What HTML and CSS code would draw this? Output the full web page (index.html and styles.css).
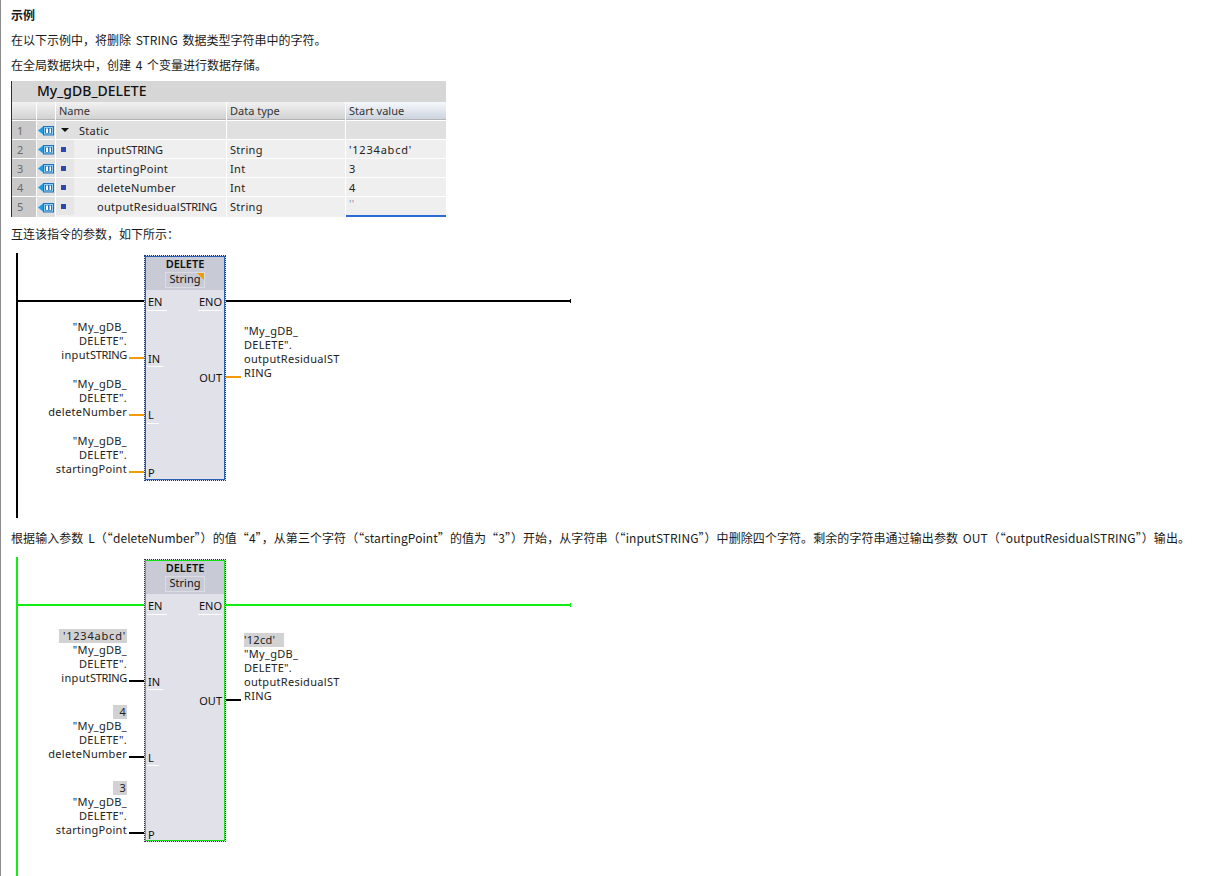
FILE: index.html
```html
<!DOCTYPE html>
<html lang="zh">
<head>
<meta charset="utf-8">
<title>DELETE 示例</title>
<link rel="stylesheet" href="styles.css">
</head>
<body>
<svg class="defs" width="0" height="0" aria-hidden="true">
  <symbol id="db-icon" viewBox="0 0 16 11">
    <path d="M0 5.5 5 1.5V4H6V9H5V9.5Z" fill="#1c9ae6"/>
    <rect x="5.5" y="1.5" width="10" height="8.5" fill="#8fcdf2" stroke="#1f74bd"/>
    <rect x="7" y="3" width="7" height="5.5" fill="#1f74bd"/>
    <rect x="8" y="3.5" width="2" height="4.5" fill="#fff"/>
    <rect x="11.5" y="3.5" width="1.5" height="4.5" fill="#fff"/>
  </symbol>
</svg>
<main class="page">
  <p class="para heading">示例</p>
  <p class="para">在以下示例中，将删除 STRING 数据类型字符串中的字符。</p>
  <p class="para">在全局数据块中，创建 4 个变量进行数据存储。</p>

  <section class="db">
    <div class="db-title">My_gDB_DELETE</div>
    <div class="db-grid">
      <div class="hd"></div><div class="hd"></div><div class="hd name-hd">Name</div><div class="hd">Data type</div><div class="hd hd-sel">Start value</div>

      <div class="num">1</div><div class="ico"><svg class="db-icon"><use href="#db-icon"/></svg></div><div class="cell first name-static"><span class="tri"></span>Static</div><div class="cell first"></div><div class="cell first"></div>

      <div class="num">2</div><div class="ico"><svg class="db-icon"><use href="#db-icon"/></svg></div><div class="cell name"><span class="dot-wrap"><span class="dot"></span></span><span class="var">input<span class="caps">STRING</span></span></div><div class="cell">String</div><div class="cell"><span class="digits">'1234abcd'</span></div>

      <div class="num">3</div><div class="ico"><svg class="db-icon"><use href="#db-icon"/></svg></div><div class="cell name"><span class="dot-wrap"><span class="dot"></span></span><span class="var">startingPoint</span></div><div class="cell">Int</div><div class="cell">3</div>

      <div class="num">4</div><div class="ico"><svg class="db-icon"><use href="#db-icon"/></svg></div><div class="cell name"><span class="dot-wrap"><span class="dot"></span></span><span class="var">deleteNumber</span></div><div class="cell">Int</div><div class="cell">4</div>

      <div class="num">5</div><div class="ico"><svg class="db-icon"><use href="#db-icon"/></svg></div><div class="cell name"><span class="dot-wrap"><span class="dot"></span></span><span class="var">outputResidual<span class="caps">STRING</span></span></div><div class="cell">String</div><div class="cell cell-sel">''</div>
    </div>
  </section>

  <p class="para para-mid">互连该指令的参数，如下所示：</p>

  <section class="lad lad-edit">
    <div class="rail"></div>
    <div class="wire wire-l"></div>
    <div class="wire wire-r"></div>
    <div class="fb">
      <div class="fb-head">
        <div class="fb-name">DELETE</div>
        <div class="fb-type">String<span class="corner"></span></div>
      </div>
      <span class="pin p-en">EN</span><span class="pin p-eno">ENO</span>
      <span class="ul ul-en"></span><span class="ul ul-eno"></span>
      <span class="pin p-in">IN</span><span class="ul ul-in"></span>
      <span class="pin p-l">L</span><span class="ul ul-l"></span>
      <span class="pin p-p">P</span>
      <span class="pin p-out">OUT</span>
    </div>
    <div class="arg arg-1">"My_gDB_<br>DELETE".<br>input<span class="caps">STRING</span></div><div class="stub stub-1"></div>
    <div class="arg arg-2">"My_gDB_<br>DELETE".<br>deleteNumber</div><div class="stub stub-2"></div>
    <div class="arg arg-3">"My_gDB_<br>DELETE".<br>startingPoint</div><div class="stub stub-3"></div>
    <div class="arg-out">"My_gDB_<br>DELETE".<br>outputResidualST<br>RING</div><div class="stub stub-out"></div>
  </section>

  <p class="para para-long">根据输入参数 L（“deleteNumber”）的值“4”，从第三个字符（“startingPoint”的值为“3”）开始，从字符串（“inputSTRING”）中删除四个字符。剩余的字符串通过输出参数 OUT（“outputResidualSTRING”）输出。</p>

  <section class="lad lad-run">
    <div class="rail"></div>
    <div class="wire wire-l"></div>
    <div class="wire wire-r"></div>
    <div class="fb">
      <div class="fb-head">
        <div class="fb-name">DELETE</div>
        <div class="fb-type">String</div>
      </div>
      <span class="pin p-en">EN</span><span class="pin p-eno">ENO</span>
      <span class="ul ul-en"></span><span class="ul ul-eno"></span>
      <span class="pin p-in">IN</span><span class="ul ul-in"></span>
      <span class="pin p-l">L</span><span class="ul ul-l"></span>
      <span class="pin p-p">P</span>
      <span class="pin p-out">OUT</span>
    </div>
    <div class="arg arg-1"><span class="val val-long digits">'1234abcd'</span>"My_gDB_<br>DELETE".<br>input<span class="caps">STRING</span></div><div class="stub stub-1"></div>
    <div class="arg arg-2"><span class="val val-short">4</span>"My_gDB_<br>DELETE".<br>deleteNumber</div><div class="stub stub-2"></div>
    <div class="arg arg-3"><span class="val val-short">3</span>"My_gDB_<br>DELETE".<br>startingPoint</div><div class="stub stub-3"></div>
    <div class="arg-out"><span class="val val-out">'12cd'</span>"My_gDB_<br>DELETE".<br>outputResidualST<br>RING</div><div class="stub stub-out"></div>
  </section>
</main>
</body>
</html>
```
FILE: styles.css
```css
* { box-sizing: border-box; }
html, body { margin: 0; padding: 0; background: #fff; }
body {
  height: 876px;
  overflow: hidden;
  font-family: "Noto Sans", "Noto Sans CJK SC", sans-serif;
  font-size: 11px;
  color: #1a1a1a;
}
.defs { position: absolute; }
.page {
  height: 876px;
  border-left: 1px solid #8c8c8c;
  padding: 3px 0 0 10px;
  overflow: hidden;
}
.para {
  margin: 0;
  height: 25px;
  line-height: 24px;
  white-space: nowrap;
  font-family: "Noto Sans CJK SC", "Noto Sans", sans-serif;
  font-size: 12px;
  word-spacing: 2px;
}
.heading { font-weight: 700; }
.para-mid { margin-top: 5px; margin-bottom: 6px; }
.para-long { margin-top: 8px; margin-bottom: 6px; letter-spacing: 0.07px; }
.caps { letter-spacing: -0.35px; }
.digits { letter-spacing: 0.8px; }

/* data block table */
.db { width: 435px; margin-top: 3px; border-left: 1px solid #333; }
.db-title {
  height: 21px;
  line-height: 20px;
  padding-left: 25px;
  background: #d6d6d6;
  font-size: 14px;
  font-weight: 500;
  color: #111;
}
.db-grid {
  display: grid;
  grid-template-columns: 24px 18px 170px 118px 100px;
  grid-template-rows: repeat(5, 18px) 20px;
  gap: 1px;
}
.db-grid > div { display: flex; align-items: center; white-space: nowrap; }
.db-grid > :nth-last-child(-n+5) { padding-bottom: 2px; }
.hd {
  padding-left: 3px;
  background: linear-gradient(#f2f2f2, #d2d2d2);
  border-bottom: 1px solid #b4b4b4;
  color: #333;
}
.hd-sel { background: linear-gradient(#f6f9fc, #ccd4df); }
.num { background: #c9c9c9; color: #6a6a6a; padding-left: 5px; }
.ico { background: #dfdfdf; justify-content: center; padding-top: 1px; }
.db-grid > .ico:nth-last-child(-n+5) { padding-bottom: 1px; }
.db-icon { width: 16px; height: 11px; display: block; }
.cell { background: #efefef; padding-left: 3px; color: #222; letter-spacing: 0.3px; }
.first { background: #e0e0e0; }
.name-static { padding-left: 5px; }
.tri {
  width: 0; height: 0;
  margin-right: 10px;
  border-style: solid;
  border-width: 4px 4px 0 4px;
  border-color: #111 transparent transparent transparent;
}
.cell.name { padding-left: 0; background: #efefef; }
.dot-wrap {
  width: 18px;
  height: 100%;
  display: flex;
  align-items: center;
  padding-left: 5px;
  background: #e6e6e6;
}
.dot { width: 5px; height: 5px; background: #2d48ad; }
.var { padding-left: 23px; }
.db-grid > .cell-sel {
  color: #8a9ab0;
  border-bottom: 2px solid #2a6bd6;
  align-items: flex-start;
  line-height: 14px;
}

/* ladder networks */
.lad { position: relative; margin-left: 5px; }
.lad-edit { height: 265px; --rung: #000; --stub: #f59a00; --edge: #2b5fb3; }
.lad-run { height: 319px; --rung: #12ee12; --stub: #000; --edge: #12e012; }
.rail { position: absolute; left: 0; top: 0; bottom: 0; width: 2px; background: var(--rung); }
.wire { position: absolute; height: 2px; background: var(--rung); top: 47px; }
.wire-l { left: 2px; width: 127px; }
.wire-r { left: 210px; width: 345px; }
.wire-r::after {
  content: "";
  position: absolute;
  right: 0; top: -1px;
  width: 1px; height: 4px;
  background: var(--rung);
}
.fb {
  position: absolute;
  left: 128px; top: 2px;
  width: 82px; height: 226px;
  background: #e0e1e9;
  border: 1px dotted #333;
  box-shadow: inset 0 0 0 1px var(--edge);
}
.lad-edit .fb { border-color: #1e3f7a; }
.lad-run .fb { height: 283px; }
.fb-head {
  height: 33px;
  margin: 1px 1px 0;
  background: #c8cad6;
  display: flex;
  flex-direction: column;
  align-items: center;
}
.fb-name { height: 15px; line-height: 13px; font-weight: 600; color: #111; }
.fb-type {
  position: relative;
  width: 40px; height: 16px;
  line-height: 12px;
  text-align: center;
  border: 1px solid #dcdde4;
  color: #111;
}
.corner {
  position: absolute;
  right: 0; top: 0;
  width: 0; height: 0;
  border-style: solid;
  border-width: 0 7px 7px 0;
  border-color: transparent #f59a00 transparent transparent;
}
.pin { position: absolute; line-height: 14px; color: #111; left: 3px; }
.ul { position: absolute; height: 1px; background: #fff; }
.p-en { top: 39px; }
.p-eno { left: auto; right: 3px; top: 39px; }
.ul-en { left: 2px; width: 20px; top: 54px; }
.ul-eno { right: 3px; width: 24px; top: 54px; }
.p-in { top: 96px; }
.ul-in { left: 2px; width: 16px; top: 110px; }
.p-l { top: 152px; }
.ul-l { left: 2px; width: 12px; top: 167px; }
.p-p { top: 210px; }
.p-out { left: auto; right: 3px; top: 115px; }

.lad-run .p-in { top: 115px; }
.lad-run .ul-in { top: 129px; }
.lad-run .p-l { top: 191px; }
.lad-run .ul-l { top: 205px; }
.lad-run .p-p { top: 268px; }
.lad-run .p-out { top: 134px; }

.arg, .arg-out { position: absolute; line-height: 14px; color: #222; white-space: nowrap; letter-spacing: 0.3px; }
.arg { left: 0; width: 111px; text-align: right; }
.arg-out { left: 228px; }
.val { display: block; height: 14px; background: #d2d2d2; text-align: right; color: #222; }
.val.digits { letter-spacing: 0.8px; }
.val-long { margin-left: auto; width: 68px; padding-right: 1px; }
.val-short { margin-left: auto; width: 14px; padding-right: 1px; }
.val-out { width: 40px; text-align: left; }

.lad-edit .arg-1 { top: 67px; }
.lad-edit .arg-2 { top: 124px; }
.lad-edit .arg-3 { top: 181px; }
.lad-edit .arg-out { top: 71px; }
.lad-run .arg-1 { top: 72px; }
.lad-run .arg-2 { top: 148px; }
.lad-run .arg-3 { top: 224px; }
.lad-run .arg-out { top: 76px; }

.stub { position: absolute; height: 2px; background: var(--stub); }
.stub-1, .stub-2, .stub-3 { left: 113px; width: 15px; }
.stub-out { left: 210px; width: 15px; }
.lad-edit .stub-1 { top: 104px; }
.lad-edit .stub-2 { top: 161px; }
.lad-edit .stub-3 { top: 218px; }
.lad-edit .stub-out { top: 123px; }
.lad-run .stub-1 { top: 123px; }
.lad-run .stub-2 { top: 199px; }
.lad-run .stub-3 { top: 275px; }
.lad-run .stub-out { top: 142px; }
```
